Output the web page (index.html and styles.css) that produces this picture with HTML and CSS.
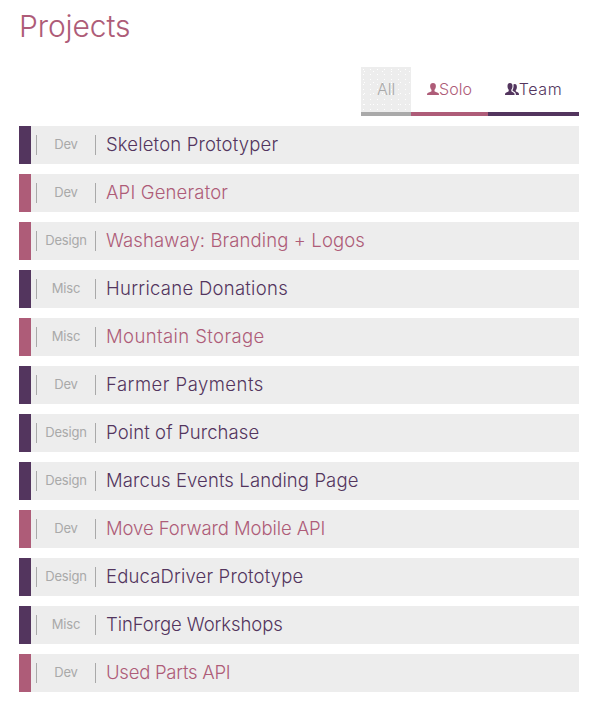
FILE: index.html
```html
<!DOCTYPE html>
<html lang="en">
<head>
<meta charset="utf-8">
<title>Projects</title>
<link rel="stylesheet" href="styles.css">
</head>
<body>
<main class="page">
<h1 class="title">Projects</h1>
<nav class="tabs">
<a class="tab tab-all"><span>All</span></a>
<a class="tab tab-solo"><svg class="icon-solo" viewBox="0 0 12 12"><path d="M6 0C4.2 0 3.1 1.1 3.1 3C3.1 4.8 3.8 6.1 4.5 6.8V8.2C3.8 8.9 1 9.2.4 10.3Q0 11 0 12H12Q12 11 11.6 10.3C11 9.2 8.2 8.9 7.5 8.2V6.8C8.2 6.1 8.9 4.8 8.9 3C8.9 1.1 7.8 0 6 0Z"/></svg><span>Solo</span></a>
<a class="tab tab-team"><svg class="icon-team" viewBox="0 0 14 12"><path d="M5 0C3.4 0 2.5 1.1 2.5 3C2.5 4.8 3 6 3.7 6.8V8.2C3 8.9.8 9.2.3 10.3Q0 11 0 12H9.6Q9.6 11 9.3 10.3C8.8 9.2 7 8.9 6.3 8.2V6.8C7 6 7.5 4.8 7.5 3C7.5 1.1 6.6 0 5 0ZM9.7 1C9.1 1 8.7 1.2 8.4 1.6C8.8 3.8 8.4 5.8 7.6 7.1V7.8C8.4 8.4 10 8.9 10.5 10Q10.9 10.8 10.9 12H14Q14 10.8 13.6 10.1C13.1 9.2 11.3 9 10.8 8.3V7.1C11.4 6.5 11.9 5.3 11.9 3.9C11.9 2 11.2 1 9.7 1Z"/></svg><span>Team</span></a>
</nav>
<ul class="list">
<li class="row team"><span class="kind">Dev</span><span class="name">Skeleton Prototyper</span></li>
<li class="row solo"><span class="kind">Dev</span><span class="name">API Generator</span></li>
<li class="row solo"><span class="kind">Design</span><span class="name snug">Washaway: Branding + Logos</span></li>
<li class="row team"><span class="kind">Misc</span><span class="name open">Hurricane Donations</span></li>
<li class="row solo"><span class="kind">Misc</span><span class="name wide">Mountain Storage</span></li>
<li class="row team"><span class="kind">Dev</span><span class="name wider">Farmer Payments</span></li>
<li class="row team"><span class="kind">Design</span><span class="name snug">Point of Purchase</span></li>
<li class="row team"><span class="kind">Design</span><span class="name snug">Marcus Events Landing Page</span></li>
<li class="row solo"><span class="kind">Dev</span><span class="name tight">Move Forward Mobile API</span></li>
<li class="row team"><span class="kind">Design</span><span class="name">EducaDriver Prototype</span></li>
<li class="row team"><span class="kind">Misc</span><span class="name tight">TinForge Workshops</span></li>
<li class="row solo"><span class="kind">Dev</span><span class="name tighter">Used Parts API</span></li>
</ul>
</main>
</body>
</html>
```
FILE: styles.css
```css
* { box-sizing: border-box; }
body { margin: 0; background: #fff; font-family: Inter, "Open Sans", sans-serif; font-weight: 350; }
.page { width: 560px; margin-left: 19px; padding-top: 4px; }
.title { margin: 0; height: 63px; font-size: 30px; line-height: 44px; font-weight: 350; color: #ae5c78; letter-spacing: -0.1px; }
.tabs { display: flex; justify-content: flex-end; height: 49px; }
.tab { display: flex; align-items: center; justify-content: center; height: 49px; padding-bottom: 1px; border-bottom: 4px solid; font-size: 16px; }
.tab-all {
  width: 50px;
  color: #a9a9a9;
  border-color: #a9a9a9;
  background-color: #ededed;
  background-image:
    radial-gradient(circle at 2.5px 2.5px, #fff 0.4px, transparent 0.9px),
    radial-gradient(circle at 3.5px 4.5px, #fff 0.4px, transparent 0.9px);
  background-size: 7px 5px, 9px 11px;
}
.tab-solo { width: 77px; color: #ae5c78; }
.tab-team { width: 91px; color: #53355e; letter-spacing: 0.6px; }
.icon-solo { width: 12px; height: 12px; fill: currentColor; }
.icon-team { width: 14px; height: 12px; fill: currentColor; }
.list { list-style: none; margin: 10px 0 0; padding: 0; display: grid; gap: 10px; }
.row { display: flex; align-items: center; height: 38px; padding-left: 5px; border-left: 12px solid; background: #ededed; }
.team { border-color: #53355e; color: #53355e; }
.solo { border-color: #ae5c78; color: #ae5c78; }
.kind { width: 60px; height: 20px; line-height: 18px; border: solid #a9a9a9; border-width: 0 1px; text-align: center; font-size: 13px; font-weight: 400; color: #a9a9a9; letter-spacing: -0.2px; }
.name { height: 38px; margin-left: 10px; font-size: 18.5px; line-height: 36px; letter-spacing: 0.16px; }
.snug { letter-spacing: 0.11px; }
.open { letter-spacing: 0.28px; }
.wide { letter-spacing: 0.4px; }
.wider { letter-spacing: 0.48px; }
.tight { letter-spacing: -0.08px; }
.tighter { letter-spacing: -0.25px; }
```
